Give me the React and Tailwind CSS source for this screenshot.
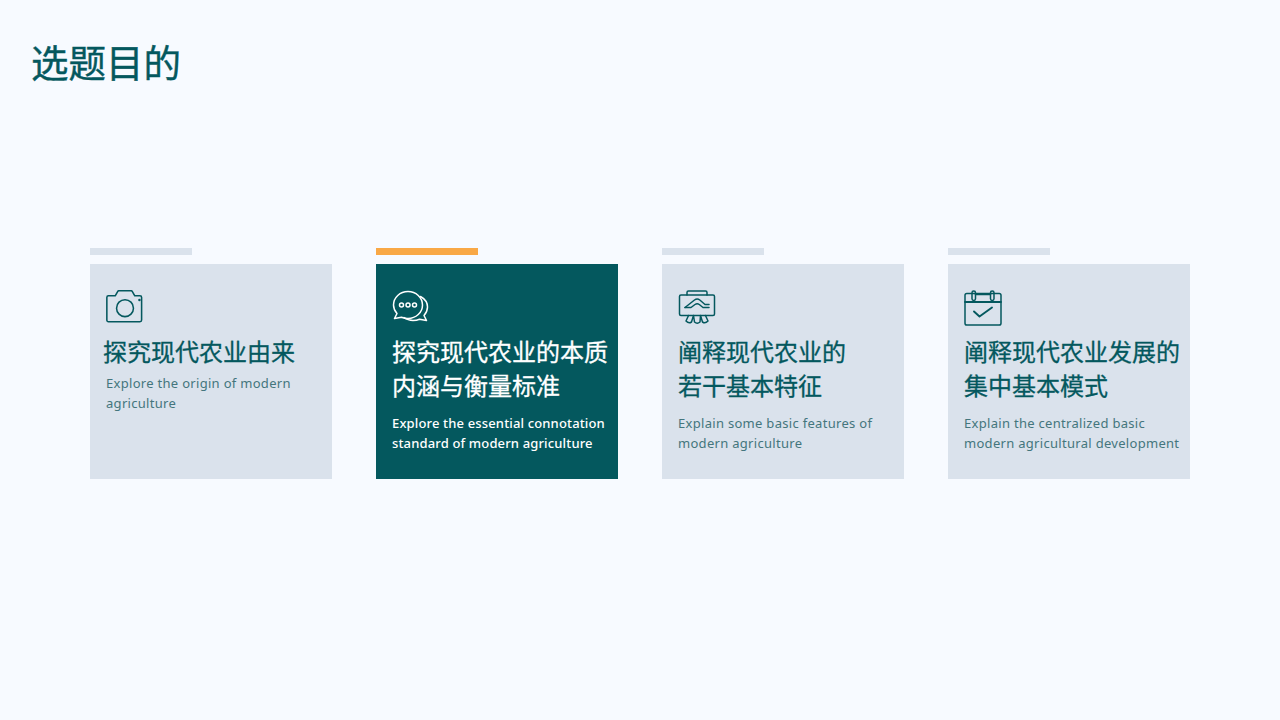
const FONT = 'font-["Noto_Sans","Noto_Sans_CJK_SC",sans-serif]';

const CameraIcon = () => (
  <svg width="38" height="33" viewBox="0.6 1.9 36.8 32" fill="none" stroke="currentColor" strokeWidth="1.5" strokeLinejoin="round">
    <path d="M3 7.500h6.500l2.500-4.200c.3-.5.7-.7 1.200-.7h11.600c.5 0 .9.2 1.200.7l2.500 4.200h5c1 0 1.600.6 1.600 1.600v22c0 1-.6 1.600-1.600 1.600H3c-1 0-1.600-.6-1.600-1.600v-22c0-1 .6-1.600 1.600-1.600z" />
    <circle cx="19" cy="19.500" r="8.200" />
    <circle cx="33" cy="11.500" r="1.200" fill="currentColor" stroke="none" />
  </svg>
);

const ChatIcon = () => (
  <svg width="38" height="36" viewBox="0 0 38 36" fill="none" stroke="currentColor" strokeWidth="1.5" strokeLinejoin="round" strokeLinecap="round">
    <path d="M16 1.500c8 0 14.500 6 14.500 13.500S24 28.500 16 28.500c-2.500 0-4.500-.4-6.500-1.300L2.500 28.500 5 23.500C2.800 21 1.500 18.200 1.500 15 1.500 7.500 8 1.500 16 1.500z" />
    <path d="M28.500 6.500c4.200 2.300 7 6 7 10.500 0 3.200-1.300 6-3.500 8.500l2.500 5-7-1.300c-2 .9-4 1.300-6.500 1.300-3.500 0-6.700-1.200-9-3" />
    <circle cx="9.500" cy="15" r="2" />
    <circle cx="16" cy="15" r="2" />
    <circle cx="22.500" cy="15" r="2" />
  </svg>
);

const BoardIcon = () => (
  <svg width="38" height="36" viewBox="0 0 38 36" fill="none" stroke="currentColor" strokeWidth="1.500" strokeLinejoin="round" strokeLinecap="round">
    <path d="M9 5V2.500c0-.9.500-1.400 1.400-1.400h17.200c.9 0 1.400.5 1.400 1.400V5" />
    <rect x="1.500" y="5" width="35" height="20.500" rx="1.500" />
    <path d="M7 17.500l9.500-7.500c1.800-1.300 3.500-1.300 5.300 0l5.200 4.500H31" />
    <path d="M7 17.500h6l4-3c1.500-1 2.800-1 4.300 0l3.700 3h6" />
    <path d="M10.500 25.500 8 31c2 2 3.500 2.300 5.500 1l2-6.500M15.500 25.500l1 6.500c2 1.700 3.500 1.700 5.500 0l.5-6.500M22.500 25.500l2 6.500c2 1.300 3.500 1 5.500-1l-2.500-5.500" />
  </svg>
);

const CalendarIcon = () => (
  <svg width="38" height="36" viewBox="0 0 38 36" fill="none" stroke="currentColor" strokeWidth="1.500" strokeLinejoin="round" strokeLinecap="round">
    <rect x="1" y="3.500" width="36" height="31.500" rx="1.800" />
    <path d="M1 12h36" strokeWidth="1.800" />
    <path d="M11.500 4.500h15" />
    <rect x="8" y="1" width="3.500" height="9.500" rx="1.700" />
    <rect x="26.500" y="1" width="3.500" height="9.500" rx="1.700" />
    <path d="M10 21.500l5.500 5L28 17.500" strokeWidth="1.900" />
  </svg>
);

const CARDS = [
  {
    title: ['探究现代农业由来'],
    desc: ['Explore the origin of modern', 'agriculture'],
    icon: <CameraIcon />,
  },
  {
    title: ['探究现代农业的本质', '内涵与衡量标准'],
    desc: ['Explore the essential connotation', 'standard of modern agriculture'],
    icon: <ChatIcon />,
    active: true,
  },
  {
    title: ['阐释现代农业的', '若干基本特征'],
    desc: ['Explain some basic features of', 'modern agriculture'],
    icon: <BoardIcon />,
  },
  {
    title: ['阐释现代农业发展的', '集中基本模式'],
    desc: ['Explain the centralized basic', 'modern agricultural development'],
    icon: <CalendarIcon />,
  },
];

const Card = ({ card, index }) => (
  <div className="w-[242px]">
    <div className={`w-[102px] h-[7px] ${card.active ? 'bg-[#f9a846]' : 'bg-[#dae2ec]'}`} />
    <div className={`mt-[9px] h-[215px] pt-[26px] pl-4 ${card.active ? 'bg-[#04585e] text-white' : 'bg-[#dae2ec] text-[#04585e]'}`}>
      <div className="h-[38px]">{card.icon}</div>
      <h2 className={`mt-[7px] text-[24px] leading-[34px] font-normal [-webkit-text-stroke:0.3px_currentColor] whitespace-nowrap ${index === 0 ? '-ml-[3px]' : ''}`}>
        {card.title.map((line) => <div key={line}>{line}</div>)}
      </h2>
      <p className={`${index === 0 ? 'mt-[4px]' : 'mt-[10px]'} text-[13px] leading-[20px] whitespace-nowrap ${card.active ? 'tracking-[0.15px] text-white font-medium' : 'tracking-[0.3px] text-[#44767d]'}`}>
        {card.desc.map((line) => <span key={line} className="block">{line}</span>)}
      </p>
    </div>
  </div>
);

export default function App() {
  return (
    <div className={`w-[1280px] h-[720px] overflow-hidden bg-[#f7faff] ${FONT}`}>
      <h1 className="pl-[31px] pt-[37px] text-[37.500px] leading-[52px] font-normal [-webkit-text-stroke:0.4px_currentColor] text-[#04585e]">选题目的</h1>
      <div className="mt-[159px] pl-[90px] flex gap-[44px]">
        {CARDS.map((card, i) => <Card key={i} card={card} index={i} />)}
      </div>
    </div>
  );
}
